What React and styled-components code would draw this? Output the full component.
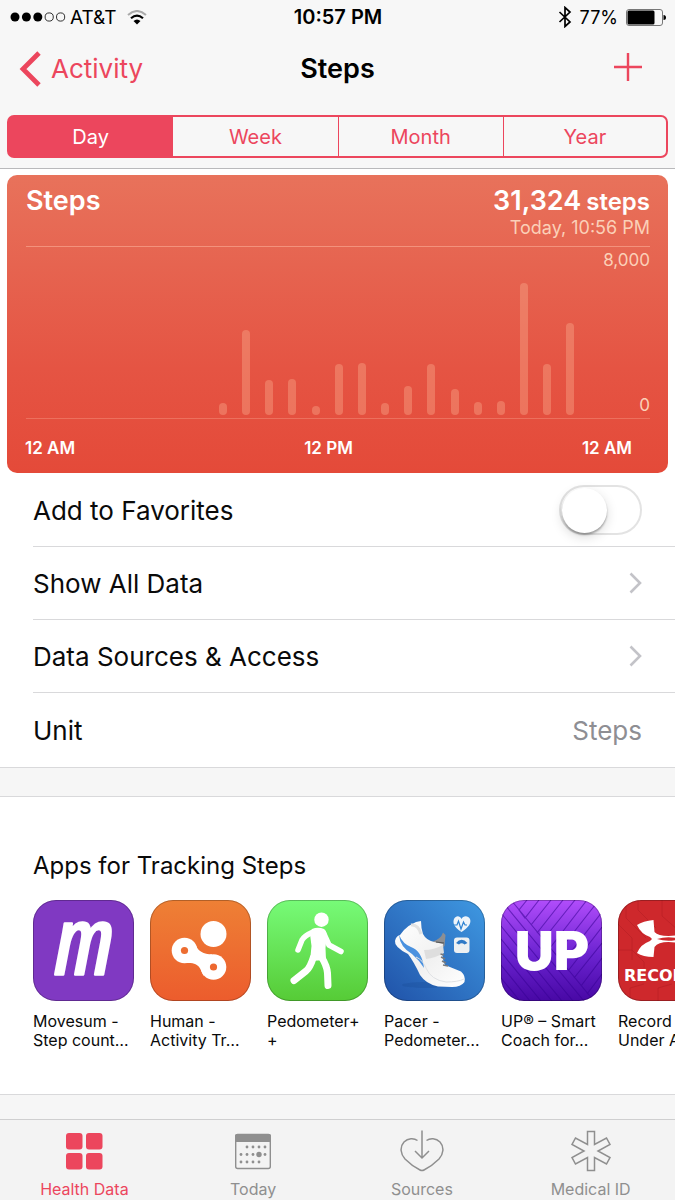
import React, { useState } from 'react'
import styled, { createGlobalStyle } from 'styled-components';

const ranges = ['Day', 'Week', 'Month', 'Year'];

const MAX_STEPS = 8000;
// one value for each hour of the day
const hourly = [
  0, 0, 0, 0, 0, 0, 0, 0, 560, 4040, 1660, 1720, 420, 2420, 2480, 560,
  1380, 2420, 1240, 620, 670, 6290, 2420, 4380,
];

const MovesumIcon = () => (
  <svg viewBox="0 0 101 101" overflow="visible" aria-hidden="true">
    <rect width="101" height="101" rx="23" fill="#8039c2" />
    <text x="51" y="74" textAnchor="middle" fontFamily="'Liberation Mono', monospace" fontSize="96" fontStyle="italic" fill="#fff" stroke="#fff" strokeWidth="2.500" strokeLinejoin="round">m</text>
  </svg>
)

const HumanIcon = () => (
  <svg viewBox="0 0 101 101" aria-hidden="true">
    <defs>
      <linearGradient id="human" x1="0" y1="0" x2="0" y2="1">
        <stop offset="0" stopColor="#ee8035" />
        <stop offset="1" stopColor="#ec5c2d" />
      </linearGradient>
    </defs>
    <rect width="101" height="101" fill="url(#human)" />
    <circle cx="63.5" cy="34" r="13" fill="#fff" />
    <circle cx="34.5" cy="50.5" r="12.8" fill="#fff" />
    <circle cx="63.5" cy="67" r="12.8" fill="#fff" />
    <path d="M44 42C47 47 48 54 62 54.300L54 76C50 70 51 62 36 63Z" fill="#fff" />
    <circle cx="34.500" cy="50.500" r="3.600" fill="#ed6d31" />
    <circle cx="63.500" cy="67" r="3.600" fill="#ed682f" />
  </svg>
)

const PedometerIcon = () => (
  <svg viewBox="0 0 101 101" aria-hidden="true">
    <defs>
      <linearGradient id="pedo" x1="0" y1="0" x2="0" y2="1">
        <stop offset="0" stopColor="#77fb78" />
        <stop offset="1" stopColor="#56cb36" />
      </linearGradient>
    </defs>
    <rect width="101" height="101" fill="url(#pedo)" />
    <circle cx="54.500" cy="19.700" r="7.200" fill="#fff" />
    <path d="M45 29Q51 26.500 57 29Q60 31 59.500 37L58.500 48L59 60L43 61L44.500 46L43 34Z" fill="#fff" />
    <g fill="none" stroke="#fff" strokeLinecap="round" strokeLinejoin="round">
      <path d="M46 32Q37 36 35 40L31 50" strokeWidth="5.500" />
      <path d="M56.500 33L62 45L74 51.500" strokeWidth="5.500" />
      <path d="M46.500 57Q43 68 39 71L27 80.500" strokeWidth="7" />
      <path d="M54.500 57Q60 66 60.500 73L61 85.500" strokeWidth="7" />
    </g>
  </svg>
)

const PacerIcon = () => (
  <svg viewBox="0 0 101 101" aria-hidden="true">
    <defs>
      <linearGradient id="pacer" x1="1" y1="0" x2="0" y2="1">
        <stop offset="0" stopColor="#3f99e2" />
        <stop offset="1" stopColor="#2052a8" />
      </linearGradient>
      <linearGradient id="shoe" x1="0" y1="0" x2="1" y2="1">
        <stop offset="0" stopColor="#fff" />
        <stop offset=".55" stopColor="#f1f1f1" />
        <stop offset="1" stopColor="#fff" />
      </linearGradient>
    </defs>
    <rect width="101" height="101" fill="url(#pacer)" />
    <ellipse cx="42" cy="85" rx="24" ry="3" fill="#194c98" opacity=".35" />
    <path d="M48 42Q57 39 59 32.500L61.500 35L60.500 46L55 50Z" fill="#8d8f93" />
    <path d="M11 41Q12 36 16 35L20 30Q25 25 32 22L37 21Q37 28 39 34Q42 40 50 42L59 44Q57 57 61 65L77 71.500Q82 76 80.500 82Q77 87 68 87L54 86.500Q42 84 36 75Q30 62 24 54Q10 47 11 41Z" fill="url(#shoe)" />
    <path d="M15 35Q19 44 27 47Q38 51 40 68Q35 60 28 54Q16 47 15 35Z" fill="#4a91df" />
    <path d="M32 57Q39 60 42 68Q47 80 62 82Q74 82 80 79" fill="none" stroke="#dfe1e4" strokeWidth="1" />
    <path d="M40 50Q50 50 59 45L60 53Q51 58 42 59Z" fill="#dedede" />
    <path d="M27 25Q34 24 37 34" fill="none" stroke="#e2e2e2" strokeWidth="3" />
    <path d="M56.500 54L60 55M57 57L61 59M58 61L62 63M59 65L64 66" stroke="#77797d" strokeWidth="1.500" />
    <path d="M52 42L60 43" stroke="#555" strokeWidth="1.200" />
    <path d="M77.500 32C70 27 68.500 23 70 19C72 15 76 15.500 77.500 19C79 15.500 84 15 86 19C87.500 23 85 27 77.500 32Z" fill="#eef4fa" />
    <path d="M69 25H73L74.500 21L77 29L79.500 22L81 25H83" fill="none" stroke="#2f83d2" strokeWidth="1.200" />
    <rect x="70" y="37.500" width="15.500" height="15.500" rx="3" fill="#edf0f2" />
    <path d="M72 43Q77.500 36.500 83.500 43L80.500 44.500Q77.500 42 75 44.500Z" fill="#2f79c6" />
  </svg>
)

const UpIcon = () => (
  <svg viewBox="0 0 101 101" aria-hidden="true">
    <defs>
      <linearGradient id="up" x1="0" y1="0" x2="0" y2="1">
        <stop offset="0" stopColor="#b14dfb" />
        <stop offset=".55" stopColor="#6a22cf" />
        <stop offset="1" stopColor="#4808a5" />
      </linearGradient>
    </defs>
    <rect width="101" height="101" fill="url(#up)" />
    <path
      d="M10 0L93 101M0 0L83 101M0 13L72 101M0 26L61 101M0 39L51 101M0 52L40 101M0 65L29 101M0 78L19 101M0 91L8 101M26 0L18 10L24 18L38 0M30 25L50 0M36 33L62 0M42 40L74 0M49 48L86 0M55 55L98 0M61 63L101 12M67 71L101 27M73 78L101 43M80 86L101 58M86 94L101 74"
      fill="none"
      stroke="#370293"
      strokeWidth="1.100"
      opacity=".55"
    />
    <text x="51" y="70" textAnchor="middle" fontFamily="Inter, sans-serif" fontSize="54" fontWeight="900" fill="#fff">UP</text>
  </svg>
)

const RecordIcon = () => (
  <svg viewBox="0 0 101 101" aria-hidden="true">
    <rect width="101" height="101" fill="#ce282c" />
    <path d="M8 0V18L28 38M20 0V10L38 28M0 50H14L26 62V68M0 24L14 38V60M44 0V16L60 30M12 101V88L26 84M40 101V88L54 84" fill="none" stroke="#b91f25" strokeWidth="1" opacity=".7" />
    <path d="M19 25Q25 21 35.500 20L36.500 32Q40 36 50.500 36Q61 36 64.500 32L65.500 20Q76 21 82 25Q78 35 68 37L65 39L68 41Q78 44 82 54Q76 57 65.500 58L64.500 47Q61 42 50.500 42Q40 42 36.500 47L35.500 57Q25 57 19 53Q23 44 32 41L34 39L32 37Q23 34 19 25ZM39 39Q50.500 42.500 62 39Q50.500 35.500 39 39Z" fill="#fff" fillRule="evenodd" />
    <text x="6" y="81" fontFamily="'DejaVu Sans', sans-serif" fontSize="16" fontWeight="700" fill="#fff">RECORD</text>
  </svg>
)

const apps = [
  { icon: <MovesumIcon />, lines: ['Movesum -', 'Step count…'] },
  { icon: <HumanIcon />, lines: ['Human -', 'Activity Tr…'] },
  { icon: <PedometerIcon />, lines: ['Pedometer+', '+'] },
  { icon: <PacerIcon />, lines: ['Pacer -', 'Pedometer…'] },
  { icon: <UpIcon />, lines: ['UP® – Smart', 'Coach for…'] },
  { icon: <RecordIcon />, lines: ['Record', 'Under Ar…'] },
];

const GridIcon = () => (
  <svg width="44" height="44" viewBox="0 0 44 44" fill="currentColor" aria-hidden="true">
    <rect x="4" y="5" width="16.500" height="16.500" rx="3" />
    <rect x="24" y="5" width="16.500" height="16.500" rx="3" />
    <rect x="4" y="25" width="16.500" height="16.500" rx="3" />
    <rect x="24" y="25" width="16.500" height="16.500" rx="3" />
  </svg>
)

const CalendarIcon = () => {
  const dots = [[16, 19], [22, 19], [28, 19], [34, 19], [10, 26.5], [16, 26.5], [22, 26.5], [34, 26.5], [10, 34], [16, 34], [22, 34], [28, 34]];
  return (
    <svg width="44" height="44" viewBox="0 0 44 44" fill="currentColor" aria-hidden="true">
      <rect x="4.700" y="6.500" width="34.600" height="34" rx="2" fill="none" stroke="currentColor" strokeWidth="1.400" />
      <path d="M4 8Q4 6 6 6H38Q40 6 40 8V14H4Z" />
      {dots.map(([x, y]) => <circle key={`${x}-${y}`} cx={x} cy={y} r="1.400" />)}
      <circle cx="28" cy="26.500" r="2.700" />
    </svg>
  )
}

const SourcesIcon = () => (
  <svg width="44" height="44" viewBox="0 0 44 44" fill="none" stroke="currentColor" strokeWidth="1.500" aria-hidden="true">
    <path d="M17.500 12.500C14 10 8 10 4 14C-.5 19 .5 26 5 31C10 36 16 40 20 42Q22 43 24 42C28 40 34 36 39 31C43.500 26 44.500 19 40 14C36 10 30 10 26.500 12.500" />
    <path d="M22 2.500V30M15 23L22 30L29 23" />
  </svg>
)

const MedicalIcon = () => (
  <svg width="44" height="44" viewBox="0 0 44 44" fill="none" stroke="currentColor" strokeWidth="1.500" aria-hidden="true">
    <path d="M18.500 3.500H25.500V16.500L37.500 10L41 16.500L29 23L41 29.500L37.500 36L25.500 29.500V42.500H18.500V29.500L6.500 36L3 29.500L15 23L3 16.500L6.500 10L18.500 16.500Z" />
  </svg>
)

const tabs = [
  { name: 'Health Data', icon: <GridIcon /> },
  { name: 'Today', icon: <CalendarIcon /> },
  { name: 'Sources', icon: <SourcesIcon /> },
  { name: 'Medical ID', icon: <MedicalIcon /> },
];

const SignalDots = () => (
  <svg width="56" height="12" viewBox="0 0 56 12" aria-hidden="true">
    {[0, 1, 2, 3, 4].map((i) => (
      <circle key={i} cx={5 + i * 11.4} cy="6" r={i < 3 ? 4.5 : 4.1} fill={i < 3 ? '#000' : 'none'} stroke="#000" strokeWidth={i < 3 ? 0 : 0.8} />
    ))}
  </svg>
)

const WifiIcon = () => (
  <svg width="20" height="15" viewBox="0 0 20 15" fill="none" aria-hidden="true">
    <path d="M1 5Q10 -3 19 5" stroke="#aaa" strokeWidth="2" />
    <path d="M4 8.300Q10 3 16 8.300" stroke="#000" strokeWidth="2.200" />
    <path d="M6.500 11Q10 8 13.500 11L10 14.500Z" fill="#000" />
  </svg>
)

const BluetoothIcon = () => (
  <svg width="14" height="22" viewBox="0 0 14 22" fill="none" stroke="#000" strokeWidth="1.700" aria-hidden="true">
    <path d="M1.500 6L12 16L7 20.500V1.500L12 6L1.500 16" />
  </svg>
)

const BatteryIcon = () => (
  <svg width="40" height="17" viewBox="0 0 40 17" aria-hidden="true">
    <rect x=".5" y=".5" width="36" height="16" rx="2.500" fill="none" stroke="#777" />
    <rect x="1.500" y="1.500" width="27" height="14" rx="1.500" />
    <path d="M37.500 6Q40 6 40 8.500Q40 11 37.500 11Z" />
  </svg>
)

const Chevron = () => (
  <svg width="14" height="24" viewBox="0 0 14 24" fill="none" stroke="#c3c3c8" strokeWidth="2.600" aria-hidden="true">
    <path d="M2.500 2.500L12 12L2.500 21.500" />
  </svg>
)

const App = () => {

const [range,setRange] = useState('Day');
const [tab,setTab] = useState('Health Data');
const [favorite,setFavorite] = useState(false);

return (
<Wrapper>
    <GlobalStyle />
    <Header>
        <StatusBar>
            <StatusGroup><SignalDots />AT&amp;T<WifiIcon /></StatusGroup>
            <Clock>10:57 PM</Clock>
            <StatusGroup $end><BluetoothIcon /><span>77%</span><BatteryIcon /></StatusGroup>
        </StatusBar>
        <NavBar>
            <BackLink href="#activity">
                <svg width="22" height="36" viewBox="0 0 22 36" fill="none" stroke="currentColor" strokeWidth="4.800" aria-hidden="true">
                    <path d="M20 2L4 18L20 34" />
                </svg>
                Activity
            </BackLink>
            <Title>Steps</Title>
            <AddButton type="button" aria-label="Add data">
                <svg width="28" height="28" viewBox="0 0 28 28" stroke="currentColor" strokeWidth="2.400" aria-hidden="true">
                    <path d="M0 14H28M14 0V28" />
                </svg>
            </AddButton>
        </NavBar>
        <Segments>
            {ranges.map((r) => (
                <Segment key={r} type="button" $active={r === range} aria-pressed={r === range} onClick={() => setRange(r)}>{r}</Segment>
            ))}
        </Segments>
    </Header>

    <Main>
        <Card>
            <CardHead>
                <CardTitle>Steps</CardTitle>
                <div>
                    <Total><strong>31,324</strong><span>steps</span></Total>
                    <Updated>Today, 10:56 PM</Updated>
                </div>
            </CardHead>
            <Plot>
                <Bars>
                    {hourly.map((steps, hour) => (
                        <Bar key={hour} style={{ height: `${(steps / MAX_STEPS) * 100}%` }} />
                    ))}
                </Bars>
                <Scale><span>8,000</span><span>0</span></Scale>
            </Plot>
            <Hours><span>12 AM</span><span>12 PM</span><span>12 AM</span></Hours>
        </Card>

        <Row>
            <label htmlFor="favorite">Add to Favorites</label>
            <Switch id="favorite" type="checkbox" role="switch" checked={favorite} onChange={() => setFavorite(!favorite)} />
        </Row>
        <Row as="a" href="#data">Show All Data<Chevron /></Row>
        <Row as="a" href="#access">Data Sources &amp; Access<Chevron /></Row>
        <Row>Unit<Value>Steps</Value></Row>
    </Main>

    <AppsSection>
        <h2>Apps for Tracking Steps</h2>
        <AppList>
            {apps.map((app) => (
                <AppLink key={app.lines[0]} href="#app">
                    <AppIcon>{app.icon}</AppIcon>
                    {app.lines.map((line) => <span key={line}>{line}</span>)}
                </AppLink>
            ))}
        </AppList>
    </AppsSection>

    <TabBar>
        {tabs.map((t) => (
            <Tab key={t.name} type="button" $active={t.name === tab} onClick={() => setTab(t.name)}>
                {t.icon}
                {t.name}
            </Tab>
        ))}
    </TabBar>
</Wrapper>
)
}

const GlobalStyle = createGlobalStyle`
    *{
        box-sizing: border-box;
    }
    body{
        margin: 0;
        background: #f6f6f6;
    }
    h1, h2, p{
        margin: 0;
    }
    button{
        font: inherit;
        border: 0;
        padding: 0;
        background: none;
        cursor: pointer;
    }
    a{
        color: inherit;
        text-decoration: none;
    }
    svg{
        display: block;
        flex: none;
    }
`

const Wrapper = styled.div`
    --pink: #ec465d;
    display: flex;
    flex-direction: column;
    min-height: 100vh;
    overflow: hidden;
    font-family: Inter, "Liberation Sans", sans-serif;
    font-size: 26px;
    color: #0a0a0a;
    background: #f6f6f6;
`

const Header = styled.header`
    padding: 0 7px 10px;
    border-bottom: 1px solid #b9b9bb;
    background: #f7f7f7;
`

const StatusBar = styled.div`
    display: grid;
    grid-template-columns: 1fr auto 1fr;
    align-items: center;
    height: 34px;
    padding: 0 2px 0 3px;
    font-size: 18px;
    color: #000;
`

const StatusGroup = styled.div`
    display: flex;
    align-items: center;
    justify-content: ${({ $end }) => ($end ? 'flex-end' : 'flex-start')};
    gap: ${({ $end }) => ($end ? '8px' : '4px')};
    font-size: ${({ $end }) => ($end ? '18px' : '19px')};
    svg:last-child{
        margin-left: ${({ $end }) => ($end ? '0' : '6px')};
    }
`

const Clock = styled.span`
    font-size: 20px;
    font-weight: 600;
`

const NavBar = styled.div`
    display: grid;
    grid-template-columns: 1fr auto 1fr;
    align-items: center;
    height: 69px;
    padding: 0 12px;
    margin-bottom: 12px;
`

const BackLink = styled.a`
    display: flex;
    align-items: center;
    gap: 10px;
    && {
        color: var(--pink);
    }
`

const Title = styled.h1`
    font-size: 27px;
    font-weight: 600;
    color: #000;
`

const AddButton = styled.button`
    justify-self: end;
    padding: 0 14px 4px;
    color: var(--pink);
`

const Segments = styled.div`
    display: grid;
    grid-template-columns: repeat(4, 1fr);
`

const Segment = styled.button`
    height: 43px;
    font-size: 20px;
    border: solid var(--pink);
    border-width: 2px 0 2px 1px;
    color: ${({ $active }) => ($active ? '#fff' : 'var(--pink)')};
    background: ${({ $active }) => ($active ? 'var(--pink)' : 'none')};
    &:first-child{
        border-left-width: 2px;
        border-radius: 7px 0 0 7px;
    }
    &:last-child{
        border-right-width: 2px;
        border-radius: 0 7px 7px 0;
    }
`

const Main = styled.main`
    padding-top: 6px;
    border-bottom: 1px solid #d9d9db;
    background: #fff;
`

const Card = styled.section`
    margin: 0 7px 1px;
    padding: 12px 18px 14px;
    border-radius: 10px;
    color: #fff;
    background: linear-gradient(#e8725b, #e66450 30%, #e55443 65%, #e44a39);
`

const CardHead = styled.div`
    display: flex;
    justify-content: space-between;
    height: 60px;
    margin-left: 1px;
    border-bottom: 1px solid rgba(255, 190, 165, .5);
`

const CardTitle = styled.h2`
    font-size: 27px;
    font-weight: 600;
    line-height: 28px;
`

const Total = styled.div`
    display: flex;
    align-items: baseline;
    justify-content: flex-end;
    gap: 5px;
    font-size: 24px;
    line-height: 28px;
    font-weight: 600;
    strong{
        font-size: 27px;
        font-weight: 600;
    }
`

const Updated = styled.p`
    text-align: right;
    font-size: 18px;
    line-height: 24px;
    color: #fbd0b8;
`

const Plot = styled.div`
    display: flex;
    height: 172px;
    margin-left: 1px;
    padding-bottom: 3px;
    border-bottom: 1px solid rgba(255, 190, 165, .3);
`

const Bars = styled.div`
    flex: 1;
    display: grid;
    grid-template-columns: repeat(24, 1fr);
    align-items: end;
    justify-items: center;
    padding-right: 12px;
`

const Bar = styled.div`
    width: 8px;
    border-radius: 4px;
    background: rgba(250, 175, 145, .38);
`

const Scale = styled.div`
    display: flex;
    flex-direction: column;
    justify-content: space-between;
    width: 56px;
    text-align: right;
    font-size: 17px;
    line-height: 26px;
    color: #fbd0b8;
    span:last-child{
        line-height: 20px;
    }
`

const Hours = styled.div`
    display: flex;
    justify-content: space-between;
    padding: 18px 18px 0 0;
    font-size: 17px;
    line-height: 22px;
    font-weight: 600;
`

const Row = styled.div`
    display: flex;
    align-items: center;
    justify-content: space-between;
    height: 73px;
    margin-left: 33px;
    padding-right: 33px;
    border-bottom: 1px solid #d9d9db;
    &:last-child{
        height: 74px;
        border-bottom: 0;
    }
`

const Value = styled.span`
    color: #8e8e93;
`

const Switch = styled.input`
    appearance: none;
    width: 83px;
    height: 50px;
    margin: 0;
    padding: 1px;
    border: 2px solid #e3e3e3;
    border-radius: 25px;
    background: ${({ checked }) => (checked ? '#4cd964' : '#fff')};
    cursor: pointer;
    &::before{
        content: '';
        display: block;
        width: 45px;
        height: 45px;
        margin-left: ${({ checked }) => (checked ? 'auto' : '0')};
        border-radius: 50%;
        background: #fff;
        box-shadow: 0 2px 2px rgba(0, 0, 0, .3), 0 4px 12px rgba(0, 0, 0, .15);
    }
`

const AppsSection = styled.section`
    margin-top: 28px;
    padding: 53px 0 44px 33px;
    border-top: 1px solid #d9d9db;
    border-bottom: 1px solid #d9d9db;
    background: #fff;
    h2{
        font-size: 24px;
        font-weight: 400;
        line-height: 32px;
    }
`

const AppList = styled.div`
    display: flex;
    gap: 16px;
    margin-top: 18px;
`

const AppLink = styled.a`
    flex: none;
    display: flex;
    flex-direction: column;
    width: 101px;
    font-size: 16px;
    line-height: 19px;
    white-space: nowrap;
`

const AppIcon = styled.div`
    position: relative;
    height: 101px;
    margin-bottom: 11px;
    svg{
        border-radius: 23px;
    }
    &::after{
        content: '';
        position: absolute;
        inset: 0;
        border: 1px solid rgba(0, 0, 0, .25);
        border-radius: 23px;
    }
`

const TabBar = styled.nav`
    display: grid;
    grid-template-columns: repeat(4, 1fr);
    margin-top: auto;
    border-top: 1px solid #cfcfd0;
    background: #f3f3f3;
`

const Tab = styled.button`
    display: flex;
    flex-direction: column;
    align-items: center;
    gap: 6px;
    padding: 8px 0 0;
    font-size: 16px;
    line-height: 22px;
    color: ${({ $active }) => ($active ? 'var(--pink)' : '#8f8f8f')};
`

export default App
